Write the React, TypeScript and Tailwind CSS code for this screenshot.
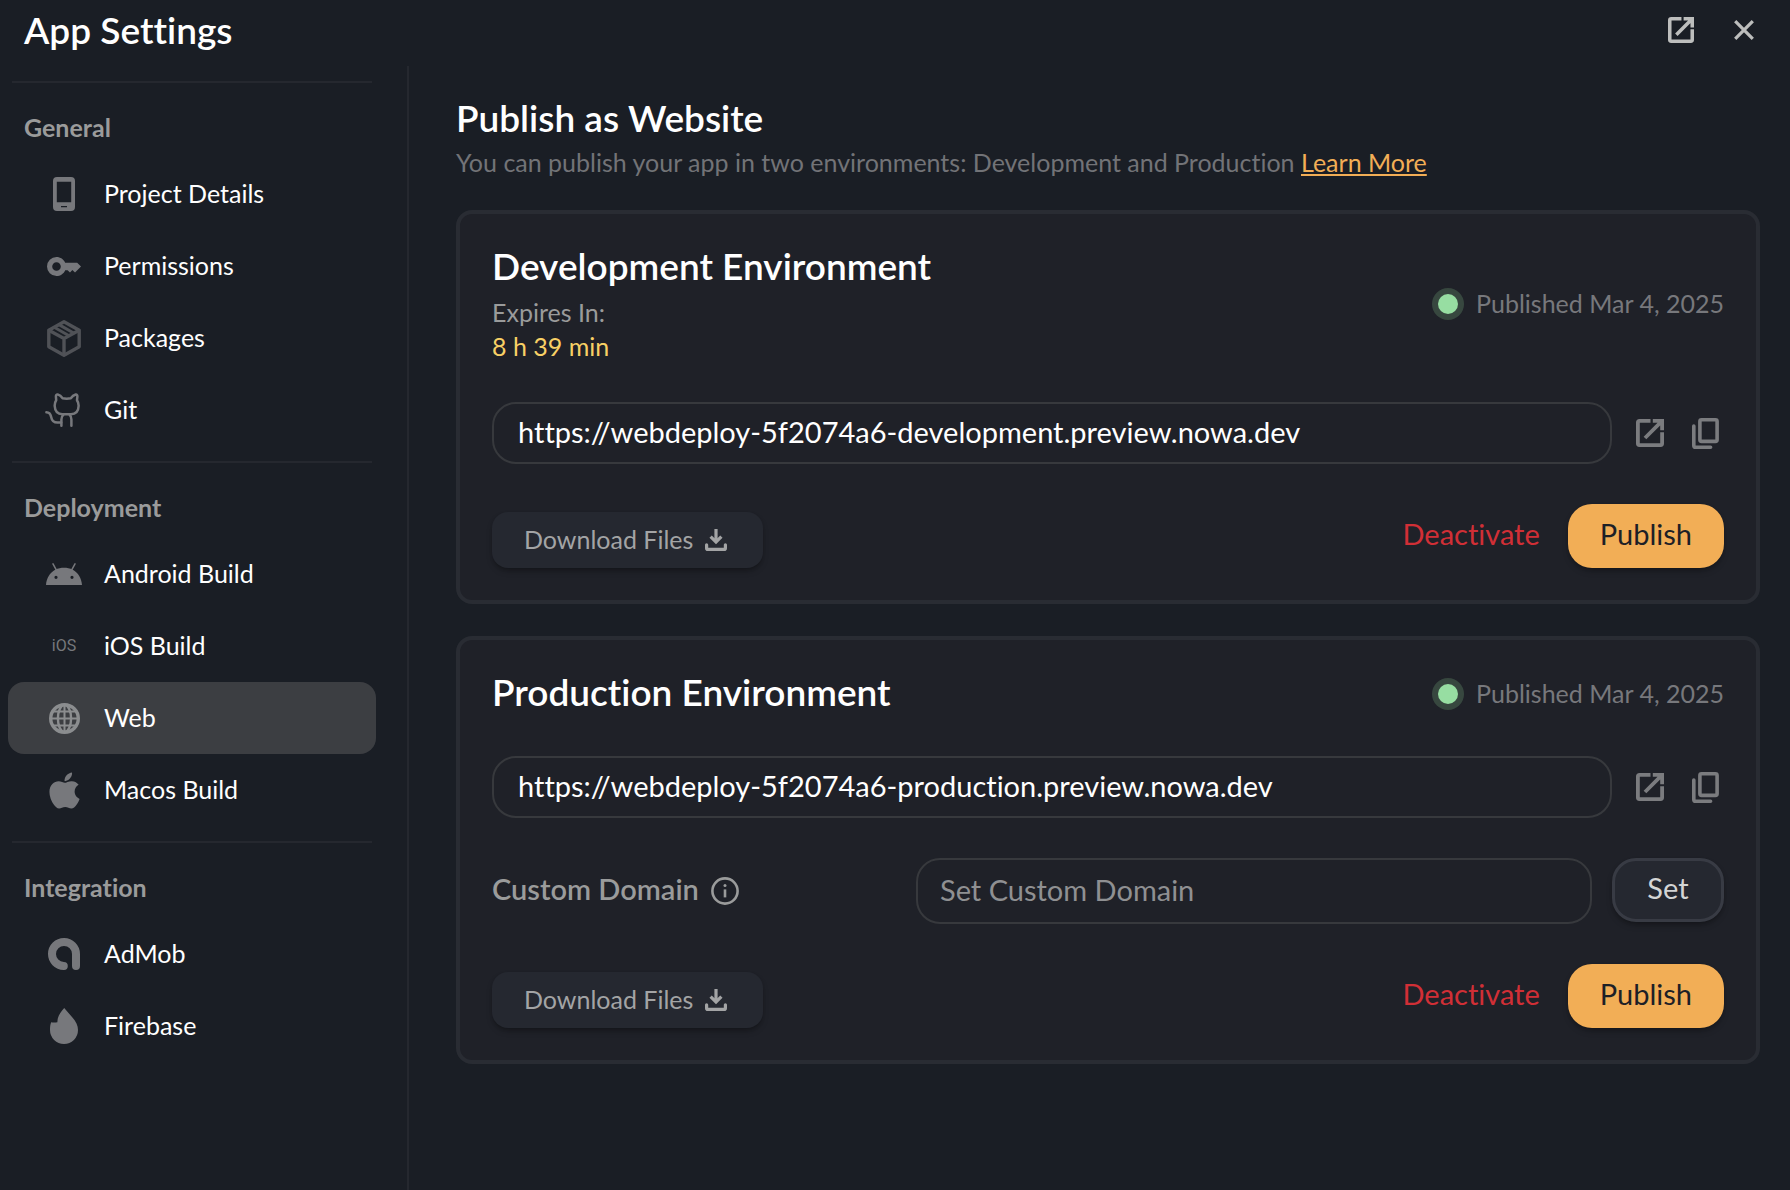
import type { ReactNode } from "react";
import { FaApple } from "react-icons/fa";

function OpenIcon({ className }: { className: string }) {
  return (
    <svg className={className} viewBox="0 0 28 28" fill="none" stroke="currentColor" strokeWidth="3.8" aria-hidden="true">
      <path d="M14.5 1.9H3.4Q1.9 1.9 1.9 3.4V24.6Q1.9 26.1 3.4 26.1H24.6Q26.1 26.1 26.1 24.6V13.2" />
      <path d="M16.8 1.9H26.1V11.2M25.6 2.4L9 19" />
    </svg>
  );
}

function CloseIcon() {
  return (
    <svg className="h-5 w-5" viewBox="0 0 20 20" fill="none" stroke="currentColor" strokeWidth="3.2" aria-hidden="true">
      <path d="M1.2 1.2L18.8 18.8M18.8 1.2L1.2 18.8" />
    </svg>
  );
}

function CopyIcon() {
  return (
    <svg className="h-[31px] w-[27px]" viewBox="0 0 27 31" fill="none" stroke="currentColor" strokeWidth="3.6" aria-hidden="true">
      <rect x="7.9" y="1.8" width="17.2" height="21.6" rx="1.6" />
      <path d="M1.8 8V27.4Q1.8 29.2 3.6 29.2H18.6" strokeLinecap="round" />
    </svg>
  );
}

function DownloadIcon() {
  return (
    <svg className="h-[22px] w-[22px]" viewBox="0 0 22 22" fill="none" stroke="currentColor" strokeWidth="3.2" aria-hidden="true">
      <path d="M11 0V12" />
      <path d="M5.6 7.6L11 13L16.4 7.6" />
      <path d="M6.5 9.5H15.5L11 14Z" fill="currentColor" stroke="none" />
      <path d="M1.6 15.8V19.2Q1.6 20.4 2.8 20.4H19.2Q20.4 20.4 20.4 19.2V15.8" strokeLinecap="round" />
    </svg>
  );
}

function InfoIcon() {
  return (
    <svg className="h-7 w-7" viewBox="0 0 28 28" fill="none" stroke="currentColor" strokeWidth="2.6" aria-hidden="true">
      <circle cx="14" cy="14" r="12.6" />
      <path d="M14 12.4V20.4" />
      <circle cx="14" cy="8.6" r="1.5" fill="currentColor" stroke="none" />
    </svg>
  );
}

function PhoneIcon() {
  return (
    <svg className="h-[34px] w-[22px]" viewBox="0 0 22 34" fill="currentColor" aria-hidden="true">
      <path
        fillRule="evenodd"
        d="M4 0H18Q22 0 22 4V30Q22 34 18 34H4Q0 34 0 30V4Q0 0 4 0ZM3.8 4.8V25.2H18.2V4.8ZM8 29V30.3H14V29Z"
      />
    </svg>
  );
}

function KeyIcon() {
  return (
    <svg className="h-[19px] w-[34px]" viewBox="0 0 34 19" fill="currentColor" aria-hidden="true">
      <path
        fillRule="evenodd"
        d="M9.5 0C13.4 0 16.8 2.3 18.2 5.8H30.2L34 9.6L28 15.6L25.4 13L23 15.6L20.6 13.2H18.2C16.8 16.7 13.4 19 9.5 19A9.5 9.5 0 0 1 9.5 0ZM9.5 5.2A4.3 4.3 0 1 0 9.5 13.8A4.3 4.3 0 1 0 9.5 5.2Z"
      />
    </svg>
  );
}

function PackageIcon() {
  return (
    <svg className="h-[37px] w-[34px] text-[#505257]" viewBox="0 0 34 37" fill="none" stroke="currentColor" strokeWidth="3.4" strokeLinejoin="round" aria-hidden="true">
      <path d="M17 1.8L32.2 10.2V26.8L17 35.2L1.8 26.8V10.2Z" />
      <path d="M1.8 10.2L17 18.4L32.2 10.2M17 18.4V35.2" />
      <path d="M7.2 7.3L22 15.8M12 4.6L27 13.2" strokeWidth="3" />
    </svg>
  );
}

function CatIcon() {
  return (
    <svg className="mr-1 h-[34px] w-[35px]" viewBox="0 0 35 34" fill="none" stroke="currentColor" strokeWidth="2.5" strokeLinecap="round" strokeLinejoin="round" aria-hidden="true">
      <path d="M12.6 1.4C11.4 1.3 10.9 2.2 10.9 3.4L11.2 7.2C10 9 9.6 10.8 9.7 13C10 18.4 12.8 21.2 17.4 21.2H26C30.6 21.2 33.4 18.4 33.6 13C33.7 10.8 33.2 9 32 7.2L32.4 3.4C32.4 2.2 31.9 1.3 30.7 1.5C28.6 2.1 27.2 3.2 25.8 5.2C23 5.8 20.4 5.8 17.6 5.2C16.2 3.2 14.8 2.1 12.6 1.4Z" />
      <path d="M16.4 32.7V26.6Q16.4 23.6 18.4 21.6M26.4 32.7V26.6Q26.4 23.6 24.6 21.6" />
      <path d="M1.4 19.3C4.2 19.4 5.4 20.8 6 23.4C6.8 27.6 8.6 29.6 12.4 29.6H16.2" />
    </svg>
  );
}

function AndroidIcon() {
  return (
    <svg className="h-[22px] w-9" viewBox="0 0 36 22" fill="currentColor" aria-hidden="true">
      <path d="M7 .8L10.4 7.2M29 .8L25.6 7.2" stroke="currentColor" strokeWidth="1.5" strokeLinecap="round" />
      <path
        fillRule="evenodd"
        d="M0 22C.5 15.3 3.8 9.8 9.2 6.8C15 4.2 21 4.2 26.8 6.8C32.2 9.8 35.5 15.3 36 22ZM10 12.7A1.6 1.6 0 1 0 10 15.9A1.6 1.6 0 1 0 10 12.7ZM26 12.7A1.6 1.6 0 1 0 26 15.9A1.6 1.6 0 1 0 26 12.7Z"
      />
    </svg>
  );
}

function GlobeIcon() {
  return (
    <svg className="h-[31px] w-[31px] text-[#8b8d8f]" viewBox="0 0 31 31" fill="none" stroke="currentColor" strokeWidth="2.4" aria-hidden="true">
      <circle cx="15.5" cy="15.5" r="13.8" strokeWidth="3.4" />
      <ellipse cx="15.5" cy="15.5" rx="6.6" ry="13.6" />
      <path d="M15.5 2V29M2 15.5H29M4 8.4H27M4 22.6H27" strokeWidth="2" />
    </svg>
  );
}

function AdMobIcon() {
  return (
    <svg className="h-8 w-8" viewBox="0 0 32 32" fill="none" stroke="currentColor" strokeWidth="8" strokeLinecap="round" aria-hidden="true">
      <path d="M15.8 28A12 12 0 1 1 28 16V28" />
    </svg>
  );
}

function FirebaseIcon() {
  return (
    <svg className="h-9 w-7" viewBox="0 0 28 36" fill="currentColor" aria-hidden="true">
      <path d="M14.2 0L22 9C26 13.6 28 17.6 28 22A14 14 0 0 1 0 22C0 19 .2 16.4 1.2 14.2C3 14.6 5 14.6 7.4 14.2C7.2 9.2 10 4.6 14.2 0Z" />
    </svg>
  );
}

type Item = { label: string; icon: ReactNode; active?: boolean };

const groups: { title: string; items: Item[] }[] = [
  {
    title: "General",
    items: [
      { label: "Project Details", icon: <PhoneIcon /> },
      { label: "Permissions", icon: <KeyIcon /> },
      { label: "Packages", icon: <PackageIcon /> },
      { label: "Git", icon: <CatIcon /> },
    ],
  },
  {
    title: "Deployment",
    items: [
      { label: "Android Build", icon: <AndroidIcon /> },
      {
        label: "iOS Build",
        icon: (
          <span aria-hidden="true" className="font-['Roboto',sans-serif] text-base leading-none">
            iOS
          </span>
        ),
      },
      { label: "Web", icon: <GlobeIcon />, active: true },
      { label: "Macos Build", icon: <FaApple size={41} aria-hidden="true" /> },
    ],
  },
  {
    title: "Integration",
    items: [
      { label: "AdMob", icon: <AdMobIcon /> },
      { label: "Firebase", icon: <FirebaseIcon /> },
    ],
  },
];

function Sidebar() {
  return (
    <aside className="w-[409px] shrink-0 border-r-2 border-[#25282f] pt-[15px] pr-[31px] pl-2">
      <nav aria-label="Settings">
        {groups.map((group) => (
          <section key={group.title} className="pb-[15px]">
            <div className="mr-1 ml-1 border-t-2 border-[#25282f]" />
            <h2 className="px-4 pt-[26px] pb-[13px] text-[25px] leading-9 font-bold text-[#9a9b9b]">{group.title}</h2>
            <ul>
              {group.items.map((item) => (
                <li key={item.label}>
                  <button
                    type="button"
                    aria-current={item.active ? "page" : undefined}
                    className={
                      item.active
                        ? "flex h-18 w-full items-center gap-4 rounded-2xl bg-[#3c3e42] pl-8 text-left text-[25px] text-white"
                        : "flex h-18 w-full items-center gap-4 rounded-2xl pl-8 text-left text-[25px] text-white"
                    }
                  >
                    <span className="flex w-12 shrink-0 justify-center text-[#77787c]">{item.icon}</span>
                    <span>{item.label}</span>
                  </button>
                </li>
              ))}
            </ul>
          </section>
        ))}
      </nav>
    </aside>
  );
}

function Status() {
  return (
    <div className="flex shrink-0 items-center gap-3 text-[25px] text-[#77787c]">
      <span className="flex h-8 w-8 items-center justify-center rounded-full bg-[#37473f]">
        <span className="h-5 w-5 rounded-full bg-[#97dea2]" />
      </span>
      <span>Published Mar 4, 2025</span>
    </div>
  );
}

function UrlRow({ url, label }: { url: string; label: string }) {
  return (
    <div className="mt-10 flex items-center text-[#7b7c7f]">
      <input
        type="text"
        readOnly
        aria-label={label}
        defaultValue={url}
        className="h-[62px] min-w-0 flex-1 rounded-3xl border-2 border-[#37393d] bg-transparent px-6 pb-1 text-[29px] text-white outline-none"
      />
      <button type="button" aria-label="Open site" className="ml-6">
        <OpenIcon className="h-7 w-7" />
      </button>
      <button type="button" aria-label="Copy address" className="mr-[5px] ml-7">
        <CopyIcon />
      </button>
    </div>
  );
}

function Actions() {
  return (
    <div className="mt-10 flex items-end justify-between">
      <button
        type="button"
        className="flex h-14 items-center gap-3 rounded-2xl bg-[#252830] pr-9 pl-8 text-[25px] text-[#a3a4a5] shadow-md shadow-black/25"
      >
        Download Files
        <DownloadIcon />
      </button>
      <div className="flex items-center gap-7">
        <button type="button" className="pb-1 text-[29px] text-[#d12f36]">
          Deactivate
        </button>
        <button type="button" className="h-16 rounded-3xl bg-[#f2ae56] px-8 pb-1 text-[29px] text-[#1d2026] shadow-md shadow-black/25">
          Publish
        </button>
      </div>
    </div>
  );
}

const cardClass = "mt-8 rounded-2xl border-4 border-[#292c33] bg-[#1f2128] p-8";
const titleClass = "text-[37px] leading-10 font-semibold text-white";

export default function App() {
  return (
    <div className="flex min-h-screen flex-col bg-[#1a1e25] font-['Lato',sans-serif] text-white [font-variant-ligatures:none]">
      <header className="flex h-[66px] items-center justify-between pr-9 pb-[6px] pl-6">
        <h1 className={titleClass}>App Settings</h1>
        <div className="flex items-center gap-10 text-[#bdbebd]">
          <button type="button" aria-label="Open in new window">
            <OpenIcon className="h-[26px] w-[26px]" />
          </button>
          <button type="button" aria-label="Close">
            <CloseIcon />
          </button>
        </div>
      </header>

      <div className="flex flex-1">
        <Sidebar />
        <main className="min-w-0 flex-1 pt-8 pr-[30px] pb-8 pl-[47px]">
          <h2 className={titleClass}>Publish as Website</h2>
          <p className="mt-2 text-[25px] leading-8 text-[#727377]">
            You can publish your app in two environments: Development and Production{" "}
            <a href="#learn-more" className="text-[#f2ae56] underline">
              Learn More
            </a>
          </p>

          <section className={cardClass}>
            <div className="flex items-center justify-between">
              <div>
                <h3 className={titleClass}>Development Environment</h3>
                <p className="mt-2 text-[25px] leading-9 text-[#9a9b9b]">Expires In:</p>
                <p className="text-[25px] leading-8 text-[#f8d065]">8 h 39 min</p>
              </div>
              <Status />
            </div>
            <UrlRow label="Development address" url="https://webdeploy-5f2074a6-development.preview.nowa.dev" />
            <Actions />
          </section>

          <section className={cardClass}>
            <div className="flex items-center justify-between">
              <div className="pb-1">
                <h3 className={titleClass}>Production Environment</h3>
              </div>
              <Status />
            </div>
            <UrlRow label="Production address" url="https://webdeploy-5f2074a6-production.preview.nowa.dev" />
            <div className="mt-10 flex items-start">
              <div className="flex h-[66px] w-[424px] shrink-0 items-center gap-3 text-[#9a9b9b]">
                <label htmlFor="custom-domain" className="pb-1 text-[29px] font-semibold">
                  Custom Domain
                </label>
                <InfoIcon />
              </div>
              <input
                id="custom-domain"
                type="text"
                placeholder="Set Custom Domain"
                className="h-[66px] min-w-0 flex-1 rounded-3xl border-2 border-[#37393d] bg-transparent px-[22px] pb-1 text-[29px] text-white outline-none placeholder:text-[#8f9092]"
              />
              <button
                type="button"
                className="ml-5 h-16 w-28 rounded-3xl border-[3px] border-[#383b44] bg-[#252830] pb-1 text-[29px] text-[#d4d5d5] shadow-md shadow-black/25"
              >
                Set
              </button>
            </div>
            <Actions />
          </section>
        </main>
      </div>
    </div>
  );
}
